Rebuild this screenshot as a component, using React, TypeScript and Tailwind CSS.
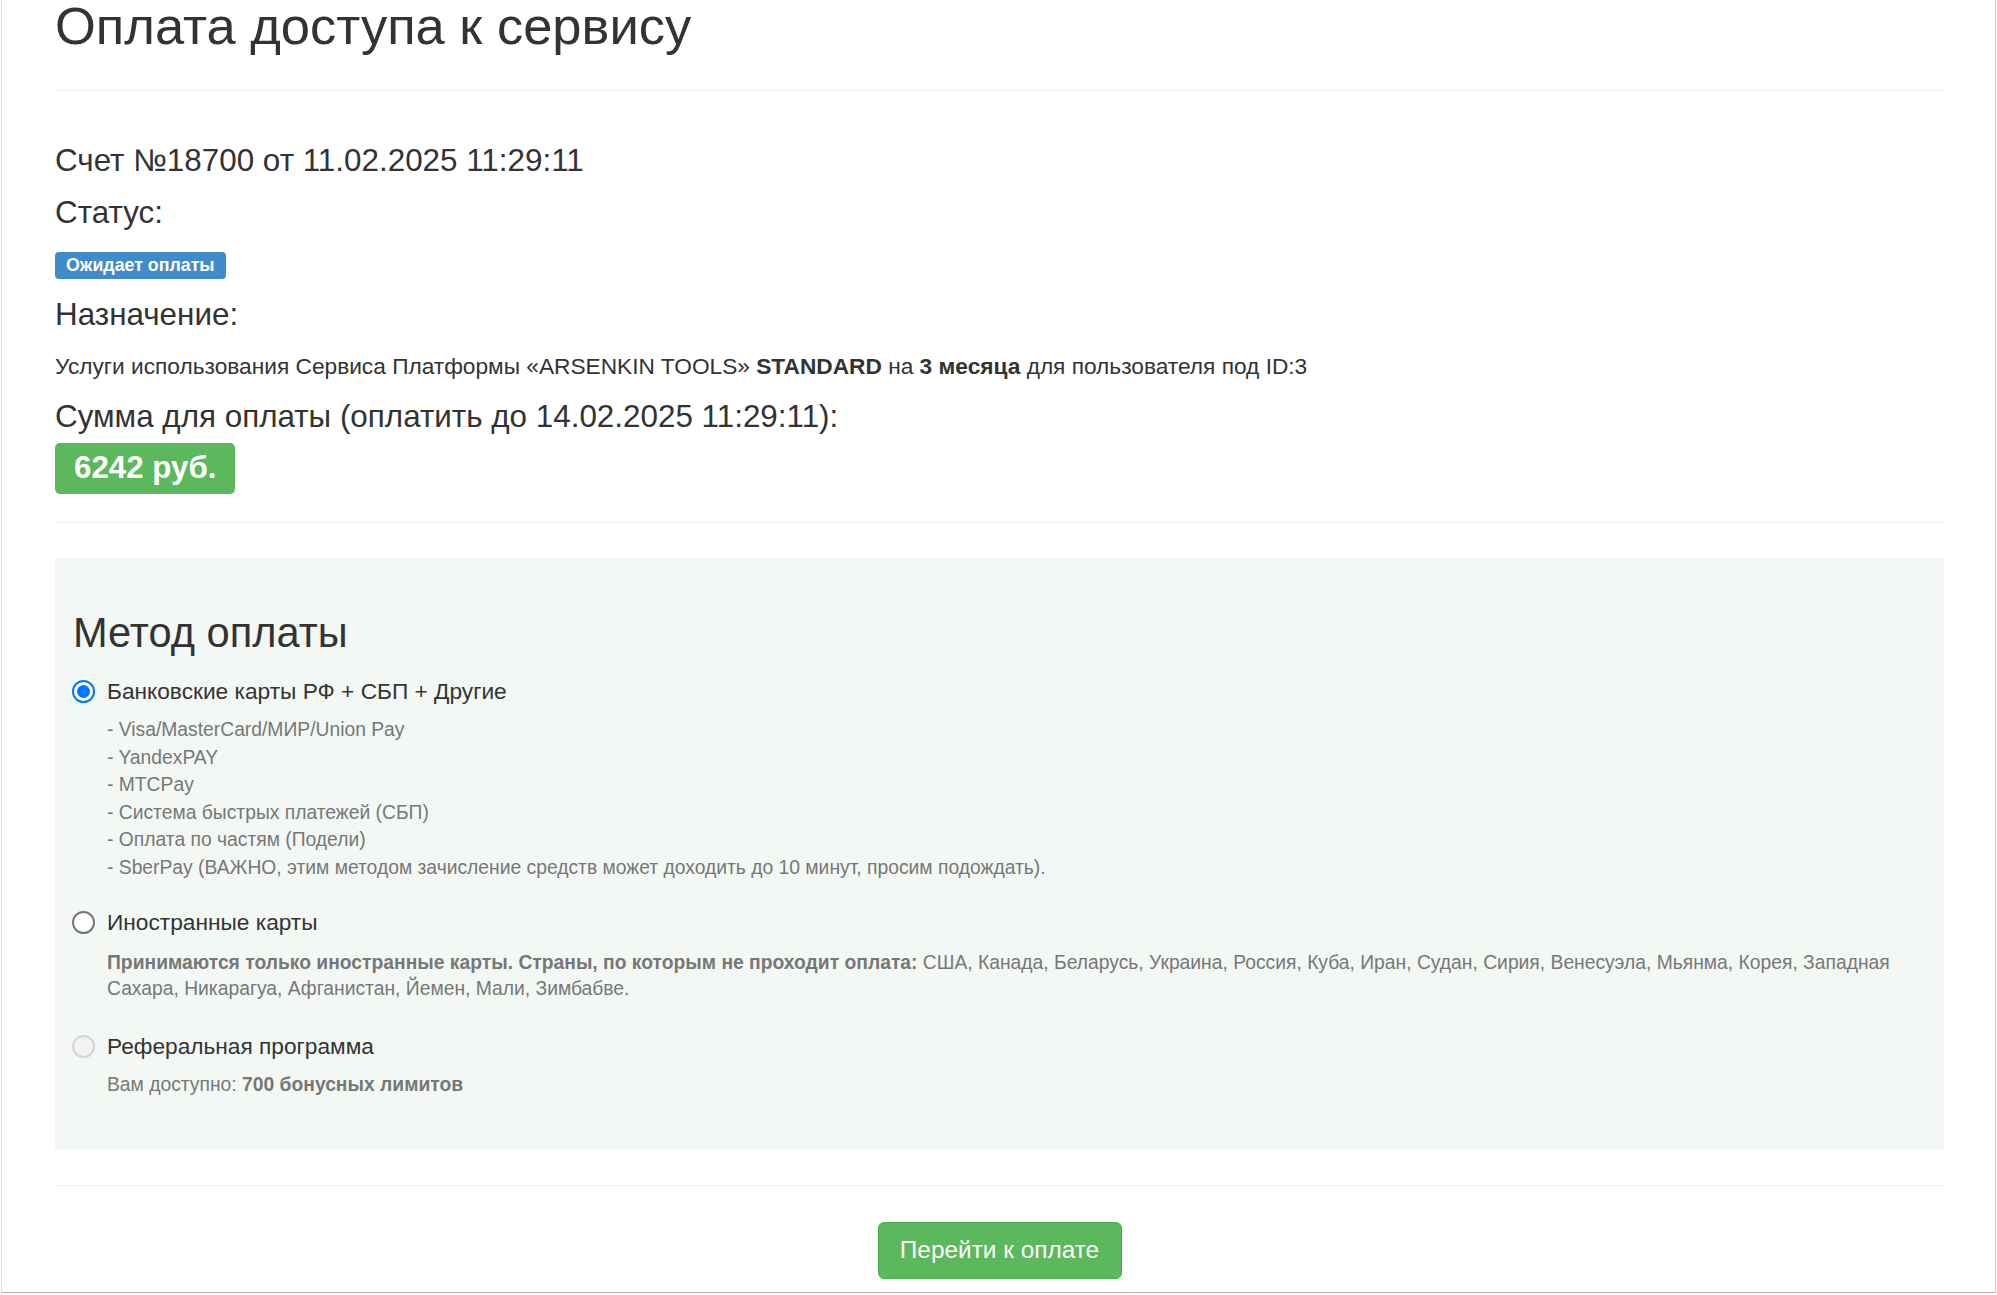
import React from 'react'

const bank = [
  '- Visa/MasterCard/МИР/Union Pay',
  '- YandexPAY',
  '- MTCPay',
  '- Система быстрых платежей (СБП)',
  '- Оплата по частям (Подели)',
  '- SberPay (ВАЖНО, этим методом зачисление средств может доходить до 10 минут, просим подождать).',
]

function Radio({ state }: { state: 'checked' | 'empty' | 'disabled' }) {
  if (state === 'checked') {
    return (
      <span className="flex h-[23px] w-[23px] shrink-0 items-center justify-center rounded-full border-2 border-[#0075ff] bg-white">
        <span className="h-[13px] w-[13px] rounded-full bg-[#0075ff]" />
      </span>
    )
  }
  if (state === 'disabled') {
    return <span className="h-[23px] w-[23px] shrink-0 rounded-full border-2 border-[#d4d4d4] bg-[#f3f3f3]" />
  }
  return <span className="h-[23px] w-[23px] shrink-0 rounded-full border-2 border-[#767676] bg-white" />
}

function MethodRow({ state, label }: { state: 'checked' | 'empty' | 'disabled'; label: string }) {
  return (
    <label className="flex h-[30px] items-center gap-3 pl-[17px]">
      <Radio state={state} />
      <span className="text-[22.7px] leading-[30px] text-[#333]">{label}</span>
    </label>
  )
}

export default function App() {
  return (
    <div className="h-[1295px] w-full overflow-hidden bg-white px-[1px] font-['Liberation_Sans',Arial,sans-serif]">
      <div className="h-[1295px] border-r border-l border-b border-r-[#d0d0d0] border-l-[#dcdcdc] border-b-[#b5aea7] pr-[51px] pl-[53px]">
        <h1 className="-mt-[2px] text-[52.5px] leading-[56px] font-normal text-[#333]">Оплата доступа к сервису</h1>
        <hr className="mt-[36px] border-t border-[#eee]" />

        <div className="mt-[52px] text-[31.4px] leading-[36px] text-[#333]">Счет №18700 от 11.02.2025 11:29:11</div>
        <div className="mt-[16px] text-[31.4px] leading-[36px] text-[#333]">Статус:</div>
        <div className="mt-[21px] flex">
          <span className="flex h-[27px] items-center rounded-[4px] bg-[#428bca] px-[11px] text-[17.8px] font-bold text-white">
            Ожидает оплаты
          </span>
        </div>
        <div className="mt-[18px] text-[31.4px] leading-[36px] text-[#333]">Назначение:</div>
        <div className="mt-[18px] text-[22.7px] leading-[30px] text-[#333]">
          Услуги использования Сервиса Платформы «ARSENKIN TOOLS» <b>STANDARD</b> на <b>3 месяца</b> для пользователя под ID:3
        </div>
        <div className="mt-[18px] text-[31.4px] leading-[36px] text-[#333]">
          Сумма для оплаты (оплатить до 14.02.2025 11:29:11):
        </div>
        <div className="mt-[8px] flex">
          <span className="flex h-[51px] items-center rounded-[5px] bg-[#5cb85c] px-[19px] text-[31.3px] font-bold text-white">
            6242 руб.
          </span>
        </div>
        <hr className="mt-[28px] border-t border-[#eee]" />

        <div className="mt-[35px] bg-[#f4f8f5] pt-[52px] pb-[52px]">
          <h2 className="pl-[18px] text-[41.6px] leading-[46px] font-normal text-[#333]">Метод оплаты</h2>

          <div className="mt-[20px]">
            <MethodRow state="checked" label="Банковские карты РФ + СБП + Другие" />
          </div>
          <div className="mt-[10px] pl-[52px] text-[19.3px] leading-[27.5px] text-[#777]">
            {bank.map((b) => (
              <div key={b}>{b}</div>
            ))}
          </div>

          <div className="mt-[26px]">
            <MethodRow state="empty" label="Иностранные карты" />
          </div>
          <div className="mt-[13px] pr-[30px] pl-[52px] text-[19.3px] leading-[26px] text-[#777]">
            <b>Принимаются только иностранные карты. Страны, по которым не проходит оплата:</b> США, Канада, Беларусь,
            Украина, Россия, Куба, Иран, Судан, Сирия, Венесуэла, Мьянма, Корея, Западная Сахара, Никарагуа, Афганистан,
            Йемен, Мали, Зимбабве.
          </div>

          <div className="mt-[29px]">
            <MethodRow state="disabled" label="Реферальная программа" />
          </div>
          <div className="mt-[11px] pl-[52px] text-[19.3px] leading-[26px] text-[#777]">
            Вам доступно: <b>700 бонусных лимитов</b>
          </div>
        </div>

        <hr className="mt-[35px] border-t border-[#eee]" />
        <div className="mt-[36px] flex justify-center">
          <button
            type="button"
            className="h-[57px] w-[244px] rounded-[6px] border border-[#4cae4c] bg-[#5cb85c] text-[24.4px] text-white"
          >
            Перейти к оплате
          </button>
        </div>
      </div>
    </div>
  )
}
